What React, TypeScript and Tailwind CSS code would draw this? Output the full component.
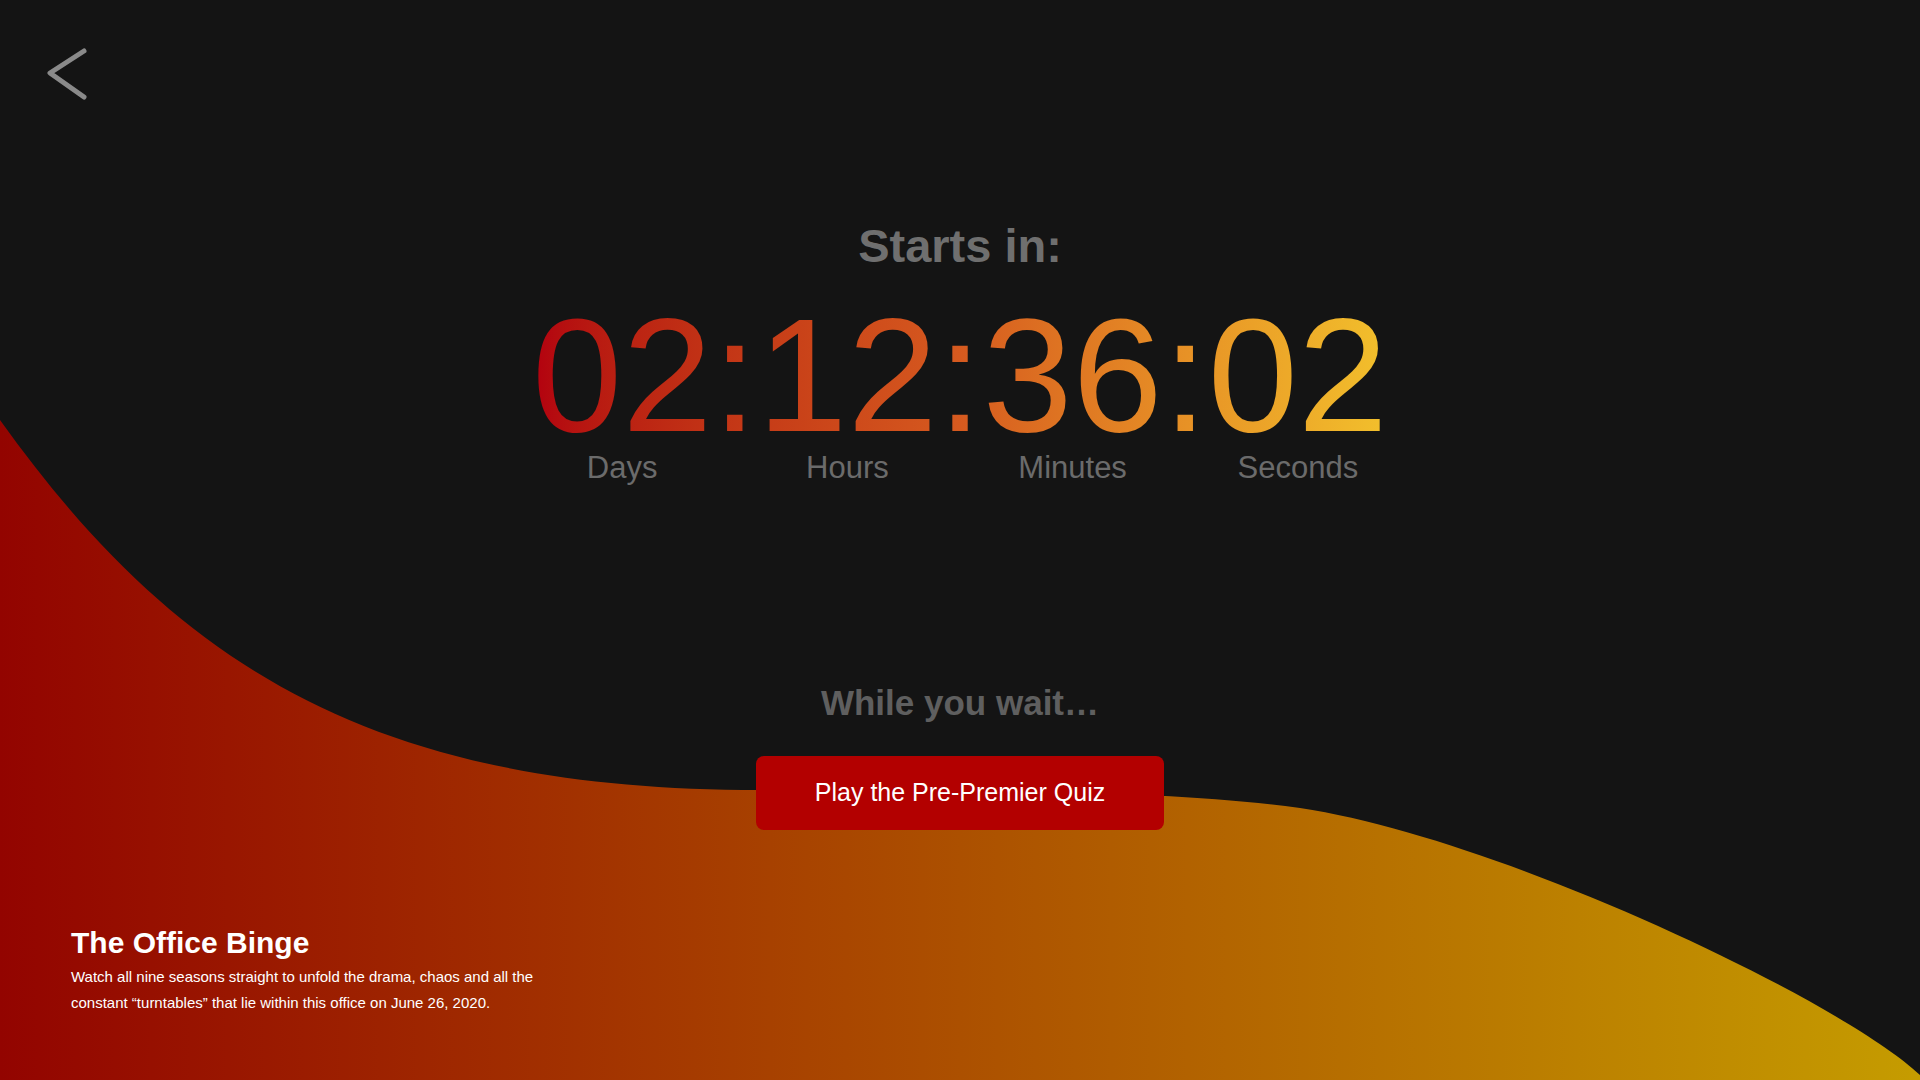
import React from "react";

const units = [
  { value: "02", label: "Days" },
  { value: "12", label: "Hours" },
  { value: "36", label: "Minutes" },
  { value: "02", label: "Seconds" },
];

const Countdown = () => {
  return (
    <div className="grid grid-cols-[auto_auto_auto_auto_auto_auto_auto]">
      {/* digits share one gradient across the whole row */}
      <div className="col-span-7 grid grid-cols-subgrid bg-linear-to-r from-[#b3000f] via-[#d65a1f] to-[#f2c02c] bg-clip-text text-transparent">
        {units.map((u, i) => (
          <React.Fragment key={"v" + i}>
            <span className="text-[162px] leading-[150px]">{u.value}</span>
            {i < units.length - 1 && (
              <span className="text-[162px] leading-[150px]">:</span>
            )}
          </React.Fragment>
        ))}
      </div>
      {units.map((u, i) => (
        <React.Fragment key={"l" + i}>
          <span className="mt-[2px] text-center text-[31px] leading-none text-[#6b6b6b]">
            {u.label}
          </span>
          {i < units.length - 1 && <span />}
        </React.Fragment>
      ))}
    </div>
  );
};

const App = () => {
  return (
    <div className="relative h-[1080px] w-full overflow-hidden bg-[#141414] font-['Liberation_Sans',Arial,Helvetica,sans-serif]">
      {/* background wave */}
      <svg
        className="absolute inset-0 h-full w-full"
        viewBox="0 0 1920 1080"
        preserveAspectRatio="none"
      >
        <defs>
          <linearGradient id="wave" x1="0" y1="0" x2="1" y2="0">
            <stop offset="0" stopColor="#930400" />
            <stop offset="1" stopColor="#c59c00" />
          </linearGradient>
        </defs>
        <path
          d="M0,420 C180,672 380,790 760,790 C1000,790 1170,790 1300,808 C1500,838 1840,1000 1920,1075 L1920,1080 L0,1080 Z"
          fill="url(#wave)"
        />
      </svg>

      <div className="relative z-10 flex h-full flex-col pt-[45px]">
        {/* back button */}
        <button className="ml-[44px] h-[60px] w-[50px]">
          <svg width="50" height="60" viewBox="0 0 50 60" fill="none">
            <polyline
              points="40,6 6,28 40,52"
              stroke="#8a8a8a"
              strokeWidth="5"
              strokeLinecap="round"
              strokeLinejoin="round"
            />
          </svg>
        </button>

        <div className="mt-[117px] flex flex-col items-center">
          <h2 className="text-[47px] font-bold leading-none text-[#6f6f6f]">
            Starts in:
          </h2>
          <div className="mt-[31px]">
            <Countdown />
          </div>

          <p className="mt-[202px] text-[35px] font-bold leading-none text-[#5f5f5f]">
            While you wait…
          </p>
          <button className="mt-[36px] h-[74px] w-[408px] rounded-[8px] bg-[#b30000] text-[25px] text-white">
            Play the Pre-Premier Quiz
          </button>
        </div>

        {/* event info */}
        <div className="ml-[71px] mt-[98px] w-[490px] text-white">
          <h3 className="text-[30px] font-bold leading-none">The Office Binge</h3>
          <p className="mt-[6px] text-[15px] leading-[26px]">
            Watch all nine seasons straight to unfold the drama, chaos and all
            the constant “turntables” that lie within this office on June 26,
            2020.
          </p>
        </div>
      </div>
    </div>
  );
};

export default App;
